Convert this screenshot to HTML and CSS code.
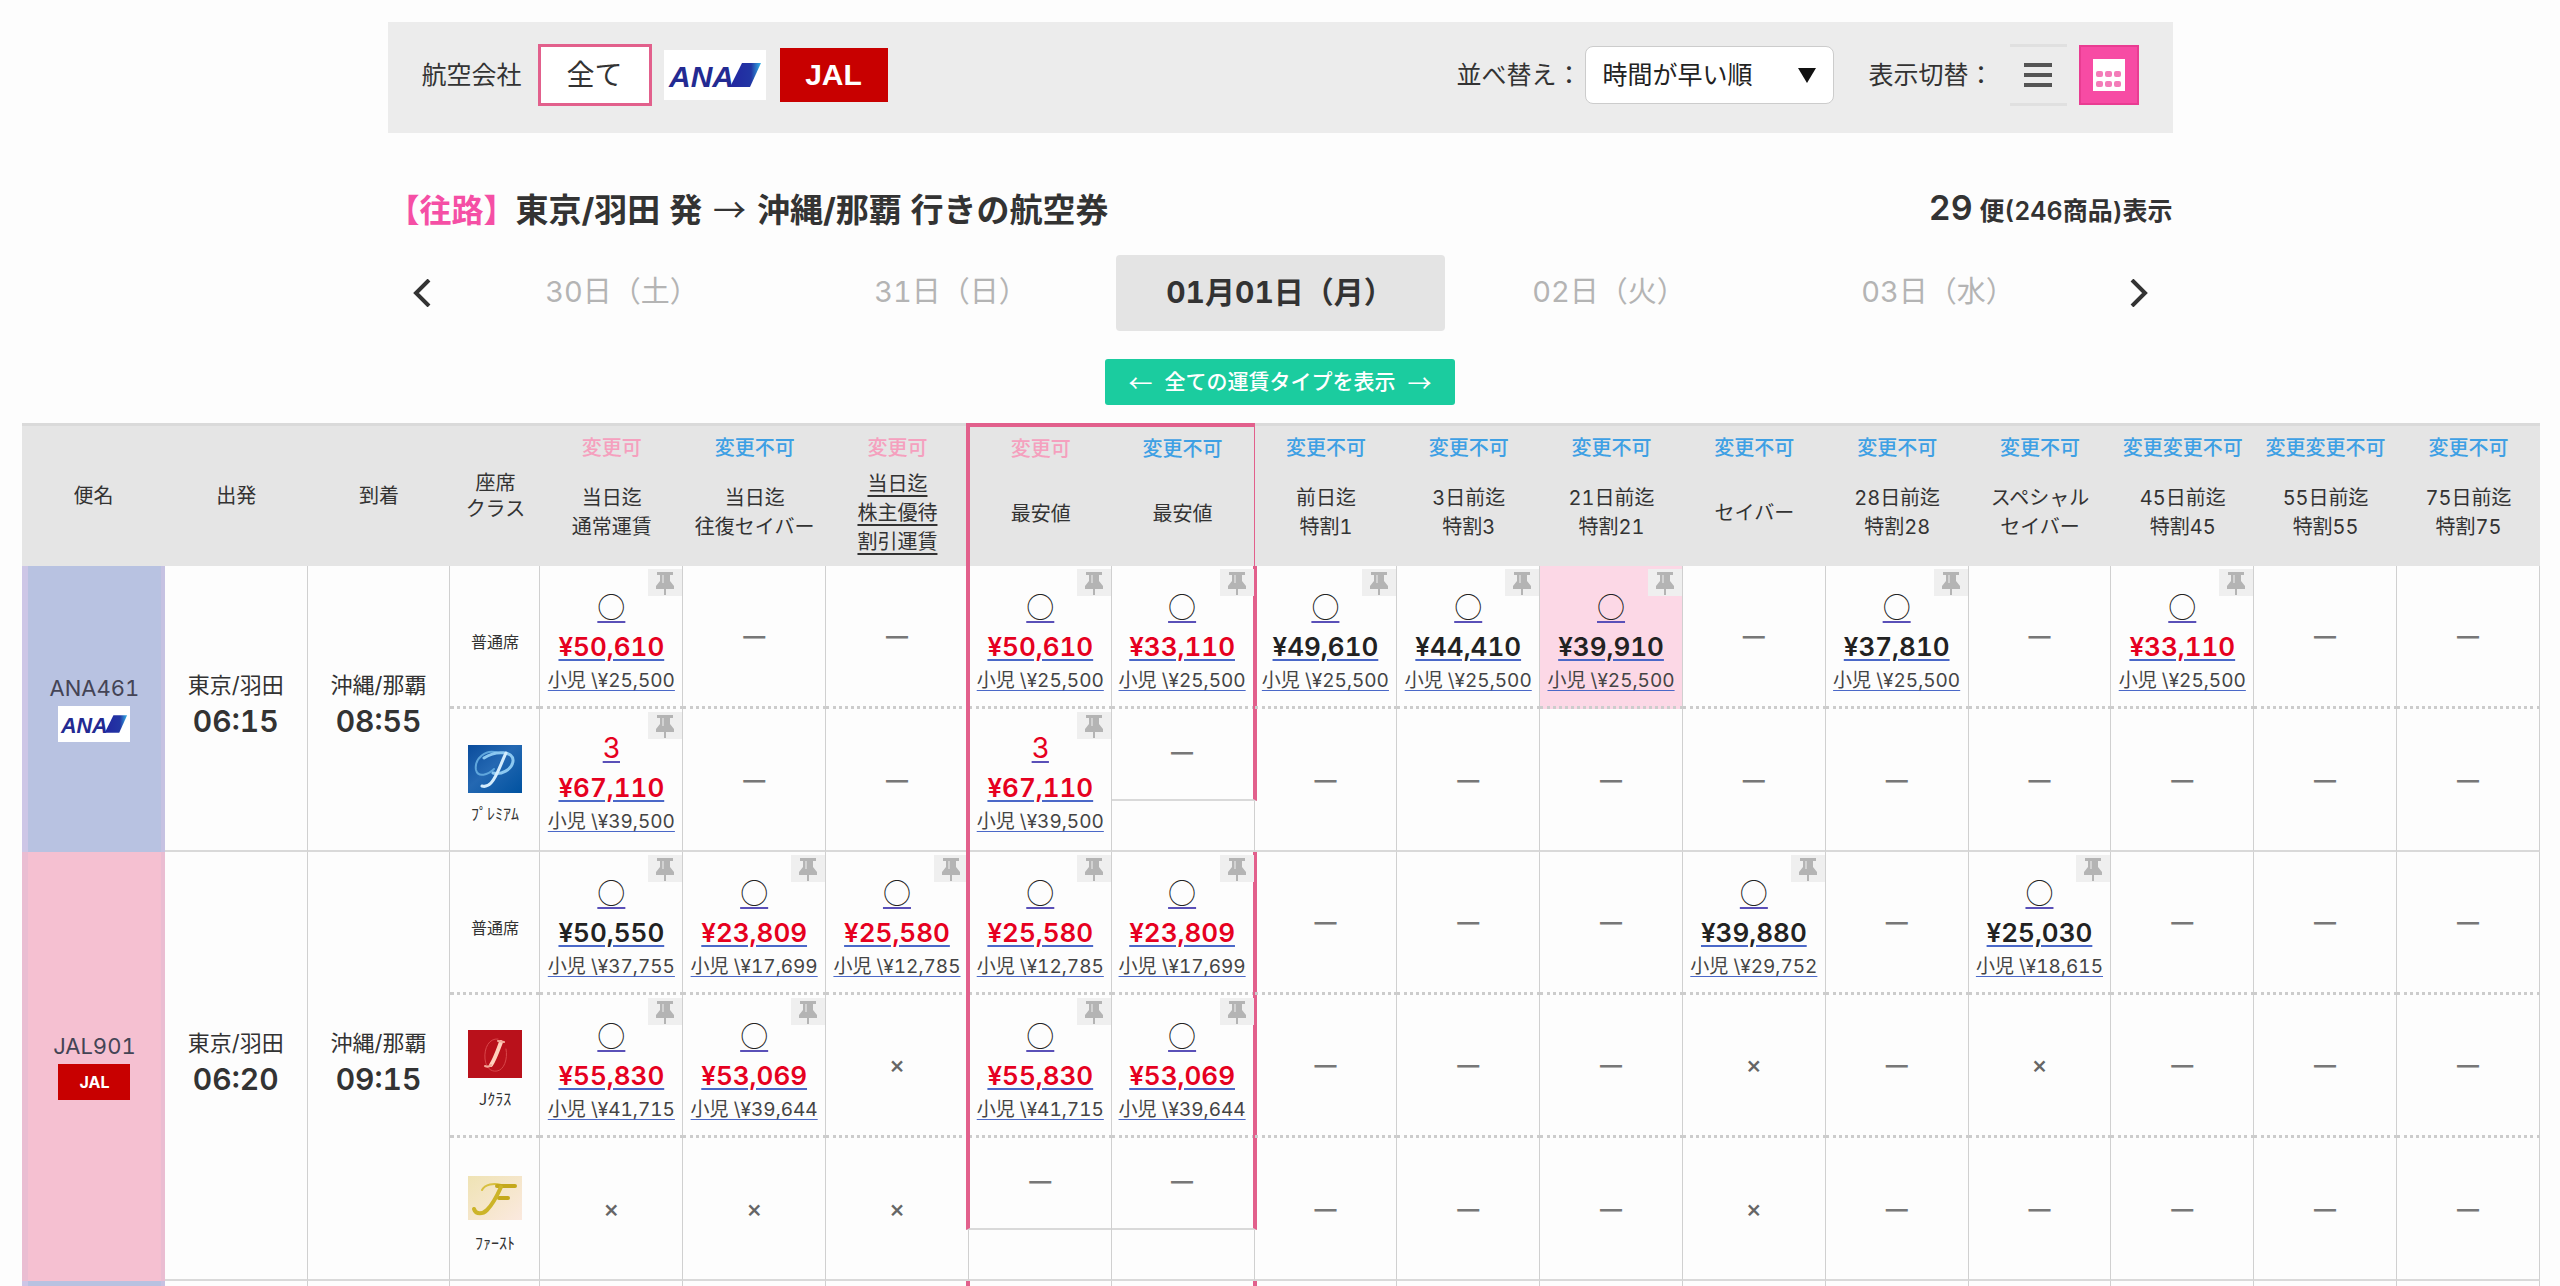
FILE: index.html
```html
<!DOCTYPE html>
<html lang="ja">
<head>
<meta charset="utf-8">
<meta name="viewport" content="width=device-width, initial-scale=1">
<title>東京/羽田 発 → 沖縄/那覇 行きの航空券</title>
<link rel="stylesheet" href="styles.css">
</head>
<body>
<svg class="sprite" aria-hidden="true">
  <defs>
    <linearGradient id="tail" x1="0" x2="1" y1="0" y2="0"><stop offset="0" stop-color="#2226a0"/><stop offset=".68" stop-color="#2236a4"/><stop offset="1" stop-color="#36b4e8"/></linearGradient>
    <linearGradient id="sea" x1="0" x2="1" y1="0" y2="1"><stop offset="0" stop-color="#0a4c9c"/><stop offset=".45" stop-color="#2468b2"/><stop offset="1" stop-color="#0052a0"/></linearGradient>
    <linearGradient id="cream" x1="0" x2="1" y1="0" y2="1"><stop offset="0" stop-color="#efe3b4"/><stop offset="1" stop-color="#fbe9df"/></linearGradient>
    <symbol id="pin" viewBox="0 0 34 27"><path fill="#b4b4b4" d="M9 3h16v3h-3v6l4 5v3h-8v6h-2v-6H8v-3l4-5V6H9z"/><path fill="#d2d2d2" d="M14 6h2v8h-2z"/></symbol>
    <symbol id="ana" viewBox="0 0 100 50">
      <text x="4" y="37" class="ana-word">ANA</text>
      <path fill="url(#tail)" d="M77 13h19L85 37H65z"/>
    </symbol>
  </defs>
</svg>

<main class="page">
  <section class="toolbar">
    <div class="group">
      <span class="label">航空会社</span>
      <button type="button" class="carrier carrier-all">全て</button>
      <button type="button" class="carrier carrier-ana" aria-label="ANA"><svg><use href="#ana"/></svg></button>
      <button type="button" class="carrier carrier-jal">JAL</button>
    </div>
    <div class="group">
      <label class="label" for="sort">並べ替え：</label>
      <span class="select">
        <select id="sort"><option>時間が早い順</option></select>
        <svg class="caret" viewBox="0 0 18 15"><path fill="#111" d="M0 0h18L9 15z"/></svg>
      </span>
      <span class="label label-view">表示切替：</span>
      <button type="button" class="view" aria-label="リスト"><svg viewBox="0 0 28 28"><path fill="#555" d="M0 2h28v4H0zM0 12h28v4H0zM0 22h28v4H0z"/></svg></button>
      <button type="button" class="view view-on" aria-label="カレンダー"><svg viewBox="0 0 32 32"><path fill="#fff" d="M0 0h32v32H0z"/><g fill="#f47cb8"><rect x="3" y="12" width="7" height="6" rx="2"/><rect x="12" y="12" width="7" height="6" rx="2"/><rect x="21" y="12" width="7" height="6" rx="2"/><rect x="3" y="22" width="7" height="6" rx="2"/><rect x="12" y="22" width="7" height="6" rx="2"/><rect x="21" y="22" width="7" height="6" rx="2"/></g></svg></button>
    </div>
  </section>

  <header class="heading">
    <h1><span class="way">【往路】</span>東京/羽田 発 <span class="arrow">→</span> 沖縄/那覇 行きの航空券</h1>
    <p class="count"><strong>29</strong> 便(246商品)表示</p>
  </header>

  <nav class="dates">
    <button type="button" class="step" aria-label="前へ"><svg viewBox="0 0 18 28"><path d="M16 1 3 14l13 13"/></svg></button>
    <div class="days">
      <a href="#">30日（土）</a>
      <a href="#">31日（日）</a>
      <a href="#" class="today" aria-current="date">01月01日（月）</a>
      <a href="#">02日（火）</a>
      <a href="#">03日（水）</a>
    </div>
    <button type="button" class="step" aria-label="次へ"><svg viewBox="0 0 18 28"><path d="m2 1 13 13L2 27"/></svg></button>
  </nav>

  <button type="button" class="show-all"><span class="arrow">←</span>全ての運賃タイプを表示<span class="arrow">→</span></button>
</main>

<div class="board">
<table>
  <colgroup><col span="3"><col class="col-seat"><col span="14"></colgroup>
  <thead>
    <tr>
      <th scope="col">便名</th><th scope="col">出発</th><th scope="col">到着</th><th scope="col">座席<br>クラス</th>
      <th scope="col" class="fare"><span class="tag ok">変更可</span><span class="name">当日迄<br>通常運賃</span></th>
      <th scope="col" class="fare"><span class="tag">変更不可</span><span class="name">当日迄<br>往復セイバー</span></th>
      <th scope="col" class="fare"><span class="tag ok">変更可</span><span class="name"><a href="#">当日迄<br>株主優待<br>割引運賃</a></span></th>
      <th scope="col" class="fare low-a"><div class="frame"><span class="tag ok">変更可</span><span class="name">最安値</span></div></th>
      <th scope="col" class="fare low-b"><div class="frame"><span class="tag">変更不可</span><span class="name">最安値</span></div></th>
      <th scope="col" class="fare"><span class="tag">変更不可</span><span class="name">前日迄<br>特割1</span></th>
      <th scope="col" class="fare"><span class="tag">変更不可</span><span class="name">3日前迄<br>特割3</span></th>
      <th scope="col" class="fare"><span class="tag">変更不可</span><span class="name">21日前迄<br>特割21</span></th>
      <th scope="col" class="fare"><span class="tag">変更不可</span><span class="name">セイバー</span></th>
      <th scope="col" class="fare"><span class="tag">変更不可</span><span class="name">28日前迄<br>特割28</span></th>
      <th scope="col" class="fare"><span class="tag">変更不可</span><span class="name">スペシャル<br>セイバー</span></th>
      <th scope="col" class="fare"><span class="tag">変更変更不可</span><span class="name">45日前迄<br>特割45</span></th>
      <th scope="col" class="fare"><span class="tag">変更変更不可</span><span class="name">55日前迄<br>特割55</span></th>
      <th scope="col" class="fare"><span class="tag">変更不可</span><span class="name">75日前迄<br>特割75</span></th>
    </tr>
  </thead>

  <tbody>
    <tr class="inner">
      <th scope="rowgroup" rowspan="2" class="flight ana"><span class="no">ANA461</span><span class="badge badge-ana"><svg><use href="#ana"/></svg></span></th>
      <td rowspan="2" class="port"><span>東京/羽田</span><time>06:15</time></td>
      <td rowspan="2" class="port"><span>沖縄/那覇</span><time>08:55</time></td>
      <td class="seat plain">普通席</td>
      <td class="price"><a href="#" class="best"><i>○</i><b>¥50,610</b><small>小児 \¥25,500</small></a><svg class="pin"><use href="#pin"/></svg></td>
      <td class="none">—</td>
      <td class="none">—</td>
      <td class="price low-a"><div class="frame"><a href="#" class="best"><i>○</i><b>¥50,610</b><small>小児 \¥25,500</small></a></div><svg class="pin"><use href="#pin"/></svg></td>
      <td class="price low-b"><div class="frame"><a href="#" class="best"><i>○</i><b>¥33,110</b><small>小児 \¥25,500</small></a></div><svg class="pin"><use href="#pin"/></svg></td>
      <td class="price"><a href="#"><i>○</i><b>¥49,610</b><small>小児 \¥25,500</small></a><svg class="pin"><use href="#pin"/></svg></td>
      <td class="price"><a href="#"><i>○</i><b>¥44,410</b><small>小児 \¥25,500</small></a><svg class="pin"><use href="#pin"/></svg></td>
      <td class="price hover"><a href="#"><i>○</i><b>¥39,910</b><small>小児 \¥25,500</small></a><svg class="pin"><use href="#pin"/></svg></td>
      <td class="none">—</td>
      <td class="price"><a href="#"><i>○</i><b>¥37,810</b><small>小児 \¥25,500</small></a><svg class="pin"><use href="#pin"/></svg></td>
      <td class="none">—</td>
      <td class="price"><a href="#" class="best"><i>○</i><b>¥33,110</b><small>小児 \¥25,500</small></a><svg class="pin"><use href="#pin"/></svg></td>
      <td class="none">—</td>
      <td class="none">—</td>
    </tr>
    <tr>
      <td class="seat"><svg class="cabin" viewBox="0 0 54 48"><path fill="url(#sea)" d="M0 0h54v48H0z"/><g fill="none" stroke-linecap="round"><path stroke="#5fa6dc" stroke-width="2" d="M30 8C18 3 6 14 8 25c2 8 12 5 18-1"/><path stroke="#8cc8f0" stroke-width="3" d="M16 13C28 5 46 6 45 16c-1 9-12 14-20 12"/><path stroke="#d4ecfc" stroke-width="3" d="M38 8C33 18 29 32 23 38c-3 3-6 4-9 3"/></g></svg>ﾌﾟﾚﾐｱﾑ</td>
      <td class="price"><a href="#" class="best few"><i>3</i><b>¥67,110</b><small>小児 \¥39,500</small></a><svg class="pin"><use href="#pin"/></svg></td>
      <td class="none">—</td>
      <td class="none">—</td>
      <td class="price low-a"><div class="frame"><a href="#" class="best few"><i>3</i><b>¥67,110</b><small>小児 \¥39,500</small></a></div><svg class="pin"><use href="#pin"/></svg></td>
      <td class="none low-b short"><div class="frame">—</div></td>
      <td class="none">—</td><td class="none">—</td><td class="none">—</td><td class="none">—</td><td class="none">—</td>
      <td class="none">—</td><td class="none">—</td><td class="none">—</td><td class="none">—</td>
    </tr>
  </tbody>

  <tbody>
    <tr class="inner">
      <th scope="rowgroup" rowspan="3" class="flight jal"><span class="no">JAL901</span><span class="badge badge-jal">JAL</span></th>
      <td rowspan="3" class="port"><span>東京/羽田</span><time>06:20</time></td>
      <td rowspan="3" class="port"><span>沖縄/那覇</span><time>09:15</time></td>
      <td class="seat plain">普通席</td>
      <td class="price"><a href="#"><i>○</i><b>¥50,550</b><small>小児 \¥37,755</small></a><svg class="pin"><use href="#pin"/></svg></td>
      <td class="price"><a href="#" class="best"><i>○</i><b>¥23,809</b><small>小児 \¥17,699</small></a><svg class="pin"><use href="#pin"/></svg></td>
      <td class="price"><a href="#" class="best"><i>○</i><b>¥25,580</b><small>小児 \¥12,785</small></a><svg class="pin"><use href="#pin"/></svg></td>
      <td class="price low-a"><div class="frame"><a href="#" class="best"><i>○</i><b>¥25,580</b><small>小児 \¥12,785</small></a></div><svg class="pin"><use href="#pin"/></svg></td>
      <td class="price low-b"><div class="frame"><a href="#" class="best"><i>○</i><b>¥23,809</b><small>小児 \¥17,699</small></a></div><svg class="pin"><use href="#pin"/></svg></td>
      <td class="none">—</td>
      <td class="none">—</td>
      <td class="none">—</td>
      <td class="price"><a href="#"><i>○</i><b>¥39,880</b><small>小児 \¥29,752</small></a><svg class="pin"><use href="#pin"/></svg></td>
      <td class="none">—</td>
      <td class="price"><a href="#"><i>○</i><b>¥25,030</b><small>小児 \¥18,615</small></a><svg class="pin"><use href="#pin"/></svg></td>
      <td class="none">—</td>
      <td class="none">—</td>
      <td class="none">—</td>
    </tr>
    <tr class="inner">
      <td class="seat"><svg class="cabin" viewBox="0 0 54 48"><path fill="#b9111b" d="M0 0h54v48H0z"/><g fill="none" stroke-linecap="round"><path stroke="#d8464a" stroke-width="1" d="M30 9c-9-1-14 9-13 20 1 9 6 13 12 12 7-1 11-12 9-22"/><path stroke="#ffd0bc" stroke-width="4" d="M33 12C30 20 27 29 23 35"/><path stroke="#f4a898" stroke-width="2" d="M30 11l6 1M23 35c-2 2-4 2-6 1"/></g></svg>Jｸﾗｽ</td>
      <td class="price"><a href="#" class="best"><i>○</i><b>¥55,830</b><small>小児 \¥41,715</small></a><svg class="pin"><use href="#pin"/></svg></td>
      <td class="price"><a href="#" class="best"><i>○</i><b>¥53,069</b><small>小児 \¥39,644</small></a><svg class="pin"><use href="#pin"/></svg></td>
      <td class="full">×</td>
      <td class="price low-a"><div class="frame"><a href="#" class="best"><i>○</i><b>¥55,830</b><small>小児 \¥41,715</small></a></div><svg class="pin"><use href="#pin"/></svg></td>
      <td class="price low-b"><div class="frame"><a href="#" class="best"><i>○</i><b>¥53,069</b><small>小児 \¥39,644</small></a></div><svg class="pin"><use href="#pin"/></svg></td>
      <td class="none">—</td><td class="none">—</td><td class="none">—</td>
      <td class="full">×</td>
      <td class="none">—</td>
      <td class="full">×</td>
      <td class="none">—</td><td class="none">—</td><td class="none">—</td>
    </tr>
    <tr>
      <td class="seat"><svg class="cabin" viewBox="0 0 54 48"><path fill="url(#cream)" d="M0 2h54v44H0z"/><g fill="none" stroke-linecap="round"><path stroke="#d8c040" stroke-width="2" d="M14 16c3-6 12-7 19-5"/><path stroke="#c4a81c" stroke-width="4" d="M29 12h18M31 24h9"/><path stroke="#ccb428" stroke-width="4" d="M33 13C29 22 25 30 19 36c-4 4-11 5-13-1"/></g></svg>ﾌｧｰｽﾄ</td>
      <td class="full">×</td>
      <td class="full">×</td>
      <td class="full">×</td>
      <td class="none low-a short"><div class="frame">—</div></td>
      <td class="none low-b short"><div class="frame">—</div></td>
      <td class="none">—</td><td class="none">—</td><td class="none">—</td>
      <td class="full">×</td>
      <td class="none">—</td><td class="none">—</td><td class="none">—</td><td class="none">—</td><td class="none">—</td>
    </tr>
  </tbody>

  <tbody class="next">
    <tr>
      <th class="flight ana"></th><td></td><td></td><td></td><td></td><td></td><td></td>
      <td class="low-a"><div class="frame"></div></td><td class="low-b"><div class="frame"></div></td>
      <td></td><td></td><td></td><td></td><td></td><td></td><td></td><td></td><td></td>
    </tr>
  </tbody>
</table>
</div>
</body>
</html>
```
FILE: styles.css
```css
:root {
  --ink: #333;
  --grid: #d9d9d9;
  --rose: #e2608c;
  --jp: Inter, "Noto Sans CJK JP", sans-serif;
}

* { box-sizing: border-box; }

html, body { height: 100%; }

body {
  margin: 0;
  overflow: hidden;
  background: #fdfdfd;
  color: var(--ink);
  font-family: var(--jp);
  font-size: 20px;
  font-variant-numeric: tabular-nums;
  line-height: 28px;
}

button, select { font: inherit; color: inherit; margin: 0; padding: 0; border: 0; }
a { color: inherit; text-decoration: none; }
svg { display: block; }
.sprite { position: absolute; width: 0; height: 0; }
.ana-word { font: italic 700 30px "Liberation Sans", sans-serif; fill: #232a92; }
.arrow { font-family: "Noto Sans CJK JP", sans-serif; font-weight: 400; }

/* search controls */
.page {
  width: 70%;
  max-width: 1785px;
  margin: 0 auto;
  padding-top: 22px;
  display: flex;
  flex-direction: column;
}
.toolbar {
  display: flex;
  justify-content: space-between;
  height: 111px;
  padding: 22px 34px 0;
  background: #ececec;
}
.group { display: flex; align-items: center; height: 62px; }
.label { font-size: 25px; }
.carrier { display: grid; place-items: center; }
.carrier-all {
  width: 114px;
  height: 62px;
  margin: 0 12px 0 16px;
  border: 3px solid var(--rose);
  background: #fff;
  font-size: 28px;
}
.carrier-ana { width: 102px; height: 50px; background: #fff; }
.carrier-ana svg { width: 100px; height: 50px; }
.carrier-jal {
  width: 108px;
  height: 54px;
  margin-left: 14px;
  background: #c80000;
  color: #fff;
  font: 700 30px/54px "Liberation Sans", sans-serif;
}
.select { position: relative; margin-left: 4px; }
.select select {
  appearance: none;
  width: 249px;
  height: 58px;
  padding-left: 16px;
  border: 1px solid #ccc;
  border-radius: 8px;
  background: #fff;
  font-size: 25px;
  color: #222;
}
.caret { position: absolute; right: 18px; top: 22px; width: 18px; height: 15px; pointer-events: none; }
.label-view { margin-left: 34px; }
.view {
  display: grid;
  place-items: center;
  width: 57px;
  height: 62px;
  margin-left: 16px;
  border: 3px solid #e0e0e0;
  border-width: 3px 0;
  background: #ececec;
}
.view svg { width: 28px; height: 28px; }
.view-on { width: 60px; height: 60px; margin-left: 12px; border: 2px solid #e93c92; background: #f74ba4; }
.view-on svg { width: 32px; height: 32px; }

.heading {
  display: flex;
  justify-content: space-between;
  align-items: center;
  height: 48px;
  margin-top: 52px;
}
h1 { margin: 0; font-size: 33px; font-weight: 700; line-height: 48px; }
h1 .arrow { margin: 0 2px; }
.way { color: #f54fa5; font-size: 32px; }
.count { margin: 0; font-size: 25px; font-weight: 600; line-height: 48px; }
.count strong { font-size: 34px; font-weight: 600; }

.dates {
  display: flex;
  align-items: center;
  gap: 24px;
  margin-top: 22px;
  padding: 0 22px;
}
.step { width: 24px; height: 40px; background: none; display: grid; place-items: center; }
.step svg { width: 18px; height: 28px; fill: none; stroke: #333; stroke-width: 4; }
.days { display: grid; grid-template-columns: repeat(5, 1fr); flex: 1; }
.days a {
  height: 76px;
  border-radius: 4px;
  color: #b4b4b4;
  font-size: 29px;
  line-height: 74px;
  text-align: center;
}
.days .today { background: #e4e4e4; color: var(--ink); font-size: 30px; font-weight: 700; }

.show-all {
  display: flex;
  align-items: center;
  justify-content: center;
  gap: 12px;
  align-self: center;
  width: 350px;
  height: 46px;
  margin-top: 28px;
  border-radius: 3px;
  background: #1bcc9f;
  color: #fff;
  font-size: 21px;
  font-weight: 500;
}
.show-all .arrow { font-size: 24px; }

/* fare table */
.board { margin-top: 18px; padding: 0 20px 0 22px; }
table {
  width: 100%;
  table-layout: fixed;
  border-collapse: separate;
  border-spacing: 0;
  text-align: center;
}
.col-seat { width: 90px; }
th, td { position: relative; padding: 0; font-weight: 400; }
thead th { height: 143px; border-top: 3px solid #dadada; background: #e5e5e5; line-height: 26px; }
.fare { vertical-align: top; }
.tag { display: block; padding-top: 9px; color: #3ea0e4; font-weight: 500; line-height: 26px; white-space: nowrap; }
.tag.ok { color: #f5a0be; }
.name { display: grid; place-content: center; height: 104px; line-height: 29px; }
.name a { text-decoration: underline; text-underline-offset: 4px; }

tbody td { height: 143px; border-right: 1px solid #d0d0d0; border-bottom: 2px solid var(--grid); }
tbody .inner td:not([rowspan]) { border-bottom: 3px dotted #ccc; }
.flight { border: solid #cdc6e6; border-width: 0 4px 0 6px; border-right-color: #c6c2e2; }
.flight.ana { background: #b8c2e1; }
.flight.jal { background: #f5c0d1; border-color: #eabdd2; }
.no, .port span { display: block; font-size: 22px; line-height: 36px; }
.no { color: #445; }
.badge { display: grid; place-items: center; width: 72px; height: 36px; margin: 0 auto 6px; }
.badge-ana { background: #fff; }
.badge-ana svg { width: 72px; height: 36px; }
.badge-jal { background: #c80000; color: #fff; font-size: 16px; font-weight: 700; }
.port time { display: block; padding-bottom: 10px; font-size: 30px; font-weight: 600; line-height: 36px; }
.seat { font-family: "Noto Sans CJK JP", sans-serif; font-size: 16px; line-height: 24px; }
.seat.plain { padding-top: 10px; }
.cabin { width: 54px; height: 48px; margin: 10px auto 8px; }

.price { vertical-align: top; }
.price a { display: block; padding-top: 19px; white-space: nowrap; }
.price i, .price b, .price small { display: block; text-decoration: underline #4a68c8; text-underline-offset: 3px; }
.price i { font: 300 28px/42px "Noto Sans CJK JP", sans-serif; color: #222; text-decoration-color: #5a50b8; }
.price b { color: #222; font-size: 26px; font-weight: 600; line-height: 40px; }
.price small { color: #444; font-size: 19px; line-height: 28px; }
.price .best b, .price .few i { color: #e60020; }
.price .few i { font-family: Inter, sans-serif; font-weight: 400; line-height: 40px; }
.pin { position: absolute; top: 3px; right: 0; width: 34px; height: 27px; background: #efefef; }
.price.hover { background: #fcd8e6; }
.none { color: #777; font-size: 22px; font-weight: 700; }
.full { color: #666; font-size: 24px; font-weight: 500; }

/* cheapest-fare columns */
.low-a, .low-b { vertical-align: top; }
.frame { height: 143px; margin-bottom: -3px; }
.low-a .frame { margin-left: -3px; border-left: 4px solid var(--rose); }
.low-b .frame { margin-right: -3px; border-right: 4px solid var(--rose); }
thead .frame { margin-top: -3px; margin-bottom: 0; border-top: 4px solid var(--rose); }
.short .frame { height: 92px; border-bottom: 2px solid var(--grid); line-height: 86px; }
.next td, .next .frame { height: 40px; }
```
